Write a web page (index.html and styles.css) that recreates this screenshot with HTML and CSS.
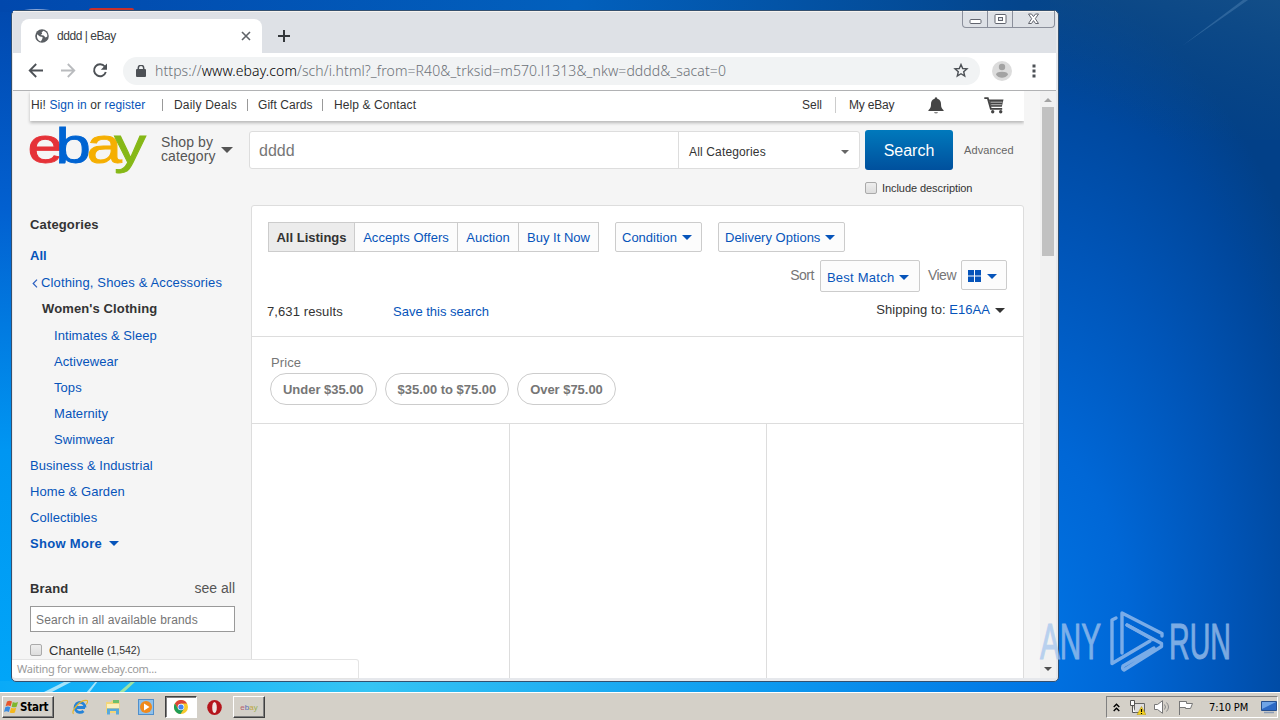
FILE: index.html
```html
<!DOCTYPE html>
<html lang="en">
<head>
    <meta charset="UTF-8">
    <meta name="viewport" content="width=device-width, initial-scale=1.0">
    <title>dddd | eBay</title>
    <link rel="stylesheet" href="styles.css">
</head>
<body>

<div class="desktop">
    <svg class="wallpaper" width="1280" height="693" viewBox="0 0 1280 693">
        <defs>
            <linearGradient id="leftSky" x1="0" y1="0" x2="0" y2="1">
                <stop offset="0" stop-color="#0148ad"/>
                <stop offset="0.3" stop-color="#0260d0"/>
                <stop offset="0.65" stop-color="#0096f2"/>
                <stop offset="1" stop-color="#01a6f8"/>
            </linearGradient>
            <linearGradient id="topSky" x1="0" y1="0" x2="1" y2="0">
                <stop offset="0" stop-color="#0148ad"/>
                <stop offset="0.45" stop-color="#0260bd"/>
                <stop offset="0.8" stop-color="#04458c"/>
                <stop offset="1" stop-color="#0b4a84"/>
            </linearGradient>
            <radialGradient id="rightSky" gradientUnits="userSpaceOnUse" cx="0" cy="0" r="1" gradientTransform="translate(1030 640) scale(330 660)">
                <stop offset="0" stop-color="#0074e4"/>
                <stop offset="0.3" stop-color="#0067d6"/>
                <stop offset="0.6" stop-color="#0055b8"/>
                <stop offset="0.85" stop-color="#00479c"/>
                <stop offset="1" stop-color="#024088"/>
            </radialGradient>
            <linearGradient id="skyTop" x1="1" y1="0" x2="0.5" y2="1">
                <stop offset="0" stop-color="#1a5488" stop-opacity="0.7"/>
                <stop offset="1" stop-color="#0b4780" stop-opacity="0"/>
            </linearGradient>
            <linearGradient id="bottomSky" x1="0" y1="0" x2="1" y2="0">
                <stop offset="0" stop-color="#0aaaf7"/>
                <stop offset="0.35" stop-color="#35c4f4"/>
                <stop offset="0.7" stop-color="#0f9df0"/>
                <stop offset="1" stop-color="#0074e4"/>
            </linearGradient>
        </defs>
        <rect width="1280" height="693" fill="url(#leftSky)"/>
        <rect width="1280" height="12" fill="url(#topSky)"/>
        <rect x="1050" width="230" height="693" fill="url(#rightSky)"/>
        <rect x="1050" width="230" height="140" fill="url(#skyTop)"/>
        <path d="M1182 46 1243 0h5z" fill="#5b8cbc" opacity="0.4"/>
        <rect y="681" width="1050" height="12" fill="url(#bottomSky)"/>
        <path d="M42 693 66 681h7L50 693zM86 693l10-12h2l-9 12z" fill="#c8f0fb" opacity="0.8"/>
        <path d="M118 693l14-12h4l-13 12z" fill="#9be3a4"/>
        <path d="M89 10q0-2 3-2h40q2 0 2 2z" fill="#c9302c"/>
        <path d="M24 10q12-2 26 0z" fill="#8aa6d6"/>
    </svg>

    <div class="window">
        <div class="tabstrip">
            <div class="tab">
                <svg class="tab-globe" width="14" height="14" viewBox="0 0 14 14">
                    <circle cx="7" cy="7" r="6.8" fill="#5a5e63"/>
                    <path d="M2 5.2 5 7.6 7.6 8.1 7.3 10 5.8 12.4Q1.4 11 2 5.2zM8.4 1.8 6.6 3.5 7.2 4.7 5.6 6 8.6 6.4 10.6 8.5 12.3 7.6Q12.8 3.2 8.4 1.8z" fill="#fff"/>
                </svg>
                <span class="tab-title">dddd | eBay</span>
                <svg class="tab-close" width="10" height="10" viewBox="0 0 10 10"><path d="M1 1l8 8M9 1 1 9" stroke="#5f6368" stroke-width="1.6"/></svg>
            </div>
            <svg class="tab-new" width="12" height="12" viewBox="0 0 12 12"><path d="M6 0v12M0 6h12" stroke="#34373b" stroke-width="2"/></svg>
            <div class="caption-buttons">
                <span class="caption-btn"><svg width="13" height="13" viewBox="0 0 13 13"><rect x="1" y="8.5" width="11" height="4" rx="1" fill="#fff" stroke="#62656f"/></svg></span>
                <span class="caption-btn"><svg width="13" height="13" viewBox="0 0 13 13"><rect x="1" y="3.500" width="11" height="9" rx="1" fill="#fff" stroke="#62656f"/><rect x="4.500" y="6.500" width="4" height="3" fill="#dee1e6" stroke="#62656f"/></svg></span>
                <span class="caption-btn caption-close"><svg width="13" height="13" viewBox="0 0 13 13"><path d="M1.500 3h3l2 2.600L8.500 3h3L8.300 7.700l3.200 4.800h-3l-2-2.900-2 2.900h-3l3.200-4.800z" fill="#fff" stroke="#62656f"/></svg></span>
            </div>
        </div>

        <div class="toolbar">
            <svg class="tool-icon" width="16" height="16" viewBox="0 0 16 16"><path d="M15 7.500H2M8.200 1 1.700 7.500l6.500 6.500" fill="none" stroke="#4d5156" stroke-width="1.800"/></svg>
            <svg class="tool-icon" width="16" height="16" viewBox="0 0 16 16"><path d="M1 7.500h13M7.800 1l6.500 6.500-6.500 6.500" fill="none" stroke="#b9bbbe" stroke-width="1.800"/></svg>
            <svg class="tool-icon" width="16" height="16" viewBox="0 0 16 16"><path d="M12.800 3.500A6 6 0 1 0 13.800 9" fill="none" stroke="#4d5156" stroke-width="1.900"/><path d="M15 .5v6.200H8.800z" fill="#4d5156"/></svg>
            <div class="omnibox">
                <svg width="10" height="13" viewBox="0 0 10 13"><rect y="4" width="10" height="8" rx="1" fill="#4d5156"/><path d="M2.300 5V3a2.700 2.700 0 0 1 5.400 0V5" fill="none" stroke="#4d5156" stroke-width="1.500"/></svg>
                <span class="url">https://<b>www.ebay.com</b>/sch/i.html?_from=R40&amp;_trksid=m570.l1313&amp;_nkw=dddd&amp;_sacat=0</span>
                <svg class="star" width="16" height="16" viewBox="0 0 16 16"><path d="M8 1.500l1.700 4 4.300.4-3.300 2.800 1 4.300L8 10.700 4.300 13l1-4.300L2 5.900l4.300-.4z" fill="none" stroke="#4d5156" stroke-width="1.400"/></svg>
            </div>
            <svg class="avatar" width="20" height="20" viewBox="0 0 20 20"><circle cx="10" cy="10" r="10" fill="#dcdcdc"/><circle cx="10" cy="6" r="3.200" fill="#a3a3a3"/><path d="M4 13.800q0-3 6-3t6 3q-2.200 3-6 3t-6-3z" fill="#a3a3a3"/></svg>
            <svg class="menu" width="4" height="14" viewBox="0 0 4 14"><path d="M.5.500h3v3h-3zM.5 5.500h3v3h-3zM.5 10.500h3v3h-3z" fill="#4d5156"/></svg>
        </div>

        <div class="viewport">
            <div class="page">
                <div class="topnav">
                    <span class="hello">Hi! <a>Sign in</a> or <a>register</a></span>
                    <span class="divider"></span>
                    <span class="deals">Daily Deals</span>
                    <span class="divider"></span>
                    <span class="gifts">Gift Cards</span>
                    <span class="divider"></span>
                    <span class="help">Help &amp; Contact</span>
                    <span class="sell">Sell</span>
                    <span class="divider tall"></span>
                    <span class="my-ebay">My eBay</span>
                    <svg class="bell" width="16" height="17" viewBox="0 0 16 17"><path d="M8 .3a1.300 1.300 0 0 1 1.300 1.500C12 2.400 13 4.600 13 7c0 3.500.8 4.600 2.600 6.300v.7H.4v-.7C2.200 11.600 3 10.500 3 7c0-2.400 1-4.600 3.700-5.200A1.300 1.300 0 0 1 8 .3z" fill="#444"/><path d="M6 15h4q-.4 1.500-2 1.500T6 15z" fill="#888"/></svg>
                    <svg class="cart" width="20" height="17" viewBox="0 0 20 17"><path d="M.3 1.200h3.500l3 10.600h11.400" fill="none" stroke="#444" stroke-width="1.800"/><path d="M4.800 2.500h14.700l-1.700 7.300H7z" fill="#444"/><path d="M6.500 5.200h12M7.200 7.700h10.500" stroke="#bbb"/><circle cx="8.700" cy="14.800" r="1.700" fill="#444"/><circle cx="16.700" cy="14.800" r="1.700" fill="#444"/></svg>
                </div>

                <div class="searchbar">
                    <svg class="logo" width="118" height="50" viewBox="0 0 118 50">
                        <text transform="translate(-2.600 37.300) scale(1.270 1)"><tspan class="logo-e">e</tspan><tspan class="logo-b" dx="-5.600">b</tspan><tspan class="logo-a" dx="-3.400">a</tspan><tspan class="logo-y" dx="-6">y</tspan></text>
                    </svg>
                    <div class="shop-by">Shop by<br>category</div>
                    <i class="caret caret-lg"></i>
                    <div class="search-field">
                        <span class="query">dddd</span>
                        <span class="category">All Categories<i class="caret caret-sm"></i></span>
                    </div>
                    <div class="search-side">
                        <div class="search-row">
                            <span class="search-btn">Search</span>
                            <span class="advanced">Advanced</span>
                        </div>
                        <div class="include"><i class="checkbox"></i>Include description</div>
                    </div>
                </div>

                <div class="columns">
                    <div class="sidebar">
                        <h3>Categories</h3>
                        <a class="all">All</a>
                        <ul>
                            <li class="parent"><svg width="6" height="9" viewBox="0 0 6 9"><path d="M5 .7 1.200 4.500 5 8.300" fill="none" stroke="#2a5fc0" stroke-width="1.200"/></svg>Clothing, Shoes &amp; Accessories</li>
                            <li class="current">Women's Clothing</li>
                            <li class="child">Intimates &amp; Sleep</li>
                            <li class="child">Activewear</li>
                            <li class="child">Tops</li>
                            <li class="child">Maternity</li>
                            <li class="child">Swimwear</li>
                            <li>Business &amp; Industrial</li>
                            <li>Home &amp; Garden</li>
                            <li>Collectibles</li>
                            <li class="more">Show More<i class="caret"></i></li>
                        </ul>
                        <div class="brand-head"><h3>Brand</h3><span>see all</span></div>
                        <div class="brand-input">Search in all available brands</div>
                        <div class="brand-row"><i class="checkbox"></i>Chantelle <small>(1,542)</small></div>
                    </div>

                    <div class="results">
                        <div class="filters">
                            <div class="tabs">
                                <span class="active">All Listings</span>
                                <span class="offers">Accepts Offers</span>
                                <span class="auction">Auction</span>
                                <span class="buy">Buy It Now</span>
                            </div>
                            <div class="dropdown condition">Condition<i class="caret"></i></div>
                            <div class="dropdown delivery">Delivery Options<i class="caret"></i></div>
                        </div>
                        <div class="sorting">
                            <span>Sort</span>
                            <div class="dropdown match">Best Match<i class="caret"></i></div>
                            <span>View</span>
                            <div class="dropdown view"><svg width="13" height="12" viewBox="0 0 13 12"><path d="M0 0h6v5.500H0zM7 0h6v5.500H7zM0 6.500h6V12H0zM7 6.500h6V12H7z" fill="#0654ba"/></svg><i class="caret"></i></div>
                        </div>
                        <div class="summary">
                            <span class="count">7,631 results</span>
                            <a class="save">Save this search</a>
                            <span class="shipping">Shipping to: <a>E16AA</a><i class="caret"></i></span>
                        </div>
                        <div class="price">
                            <div class="price-label">Price</div>
                            <div class="pills">
                                <span class="pill">Under $35.00</span>
                                <span class="pill">$35.00 to $75.00</span>
                                <span class="pill">Over $75.00</span>
                            </div>
                        </div>
                        <div class="items"><div></div><div></div><div></div></div>
                    </div>
                </div>
            </div>
            <div class="scrollbar">
                <i class="arrow-up"></i>
                <i class="thumb"></i>
                <i class="arrow-down"></i>
            </div>
        </div>
        <div class="status">Waiting for www.ebay.com...</div>
    </div>

    <svg class="watermark" width="210" height="72" viewBox="1034 604 210 72">
        <g class="watermark-text">
            <text x="1040" y="659" textLength="61" lengthAdjust="spacingAndGlyphs">ANY</text>
            <text x="1169" y="659" textLength="62" lengthAdjust="spacingAndGlyphs">RUN</text>
        </g>
        <g fill="none" stroke="#8fb9ec" stroke-width="3.400" stroke-linejoin="round" stroke-linecap="round" opacity="0.85">
            <path d="M1116 618l-4 2v43.500l38-22.500"/>
            <path d="M1122 653v-40l40 20.500v2.500M1127 625l26 14.500"/>
            <path d="M1127 625l34.500 18.500v3L1124 670q-2-1-1-4l31-18"/>
        </g>
    </svg>

    <div class="taskbar">
        <div class="start">
            <svg width="15" height="14" viewBox="0 0 15 14"><path d="M3 1.500q2.500-1.500 5 0L6.600 6.200q-2.500-1.300-5 0z" fill="#e8552b"/><path d="M8.800 2q2.500 1.300 5.200 0l-1.400 4.700q-2.600 1.300-5 0z" fill="#7fb72d"/><path d="M1.300 7.200q2.500-1.300 5 0L4.900 12q-2.600-1.400-4.900 0z" fill="#3a8be0"/><path d="M7.200 7.700q2.500 1.300 5 0L10.900 12.400q-2.600 1.400-5.200 0z" fill="#f5b81d"/></svg>
            Start
        </div>
        <div class="launch">
            <svg width="16" height="16" viewBox="0 0 16 16"><path d="M13 8.500H4.500M13 8.500A5 5 0 1 0 11.500 12" fill="none" stroke="#2583d8" stroke-width="2.800"/><path d="M1.500 14.800C-1 12 8 .5 15 1.500q1.500 1-.8 4" fill="none" stroke="#e3b52c" stroke-width="1.200"/></svg>
            <svg width="16" height="16" viewBox="0 0 16 16"><path d="M1 3h5l1-1.500h7.500V14H1z" fill="#f2d579"/><path d="M8 1h6v3H8z" fill="#6fc06b"/><path d="M2 5h12v4H2z" fill="#fbf0bd"/><path d="M2 15.500V9.500h12v6h-3V12H5v3.500z" fill="#58a9dc"/></svg>
            <svg width="16" height="16" viewBox="0 0 16 16"><rect x=".5" y=".5" width="15" height="15" fill="#8fc1ea" stroke="#4f8fcc"/><circle cx="8" cy="8" r="6" fill="#f08a1c"/><path d="M6 4.500 11.500 8 6 11.500z" fill="#fff"/></svg>
        </div>
        <div class="task task-active">
            <svg width="14" height="14" viewBox="0 0 14 14"><circle cx="7" cy="7" r="7" fill="#f7c92c"/><path d="M.9 3.500A7 7 0 0 1 13.100 3.500H7L4 8.800z" fill="#dc4437"/><path d="M.9 3.500A7 7 0 0 0 6.500 14L10 8.700H4z" fill="#1f9d57"/><circle cx="7" cy="7" r="3.300" fill="#fff"/><circle cx="7" cy="7" r="2.600" fill="#4384f3"/></svg>
        </div>
        <svg class="opera" width="15" height="15" viewBox="0 0 15 15"><ellipse cx="7.500" cy="7.500" rx="7.300" ry="7.500" fill="#b5151c"/><ellipse cx="7.500" cy="7.500" rx="2.300" ry="5.600" fill="#efe5e2"/></svg>
        <div class="task task-ebay"><span class="c-red">e</span><span class="c-blue">b</span><span class="c-yellow">a</span><span class="c-green">y</span></div>
        <div class="tray">
            <svg width="7" height="9" viewBox="0 0 7 9"><path d="M.7 4 3.500 1.200 6.300 4M.7 8 3.500 5.200 6.300 8" fill="none" stroke="#000" stroke-width="1.400"/></svg>
            <svg class="network" width="16" height="15" viewBox="0 0 16 15"><path d="M4.500 3.500h10v9h-10z" fill="#ddd" stroke="#666"/><path d="M.5.500h4v5h-4zM2.500 5.500v7h3" fill="#fff" stroke="#555"/><path d="M11.500 6.500 16 14.800H7z" fill="#f5d21d" stroke="#a98a10" stroke-width=".5"/><path d="M11.500 9v3M11.500 13v1" stroke="#000" stroke-width="1.200"/></svg>
            <svg class="sound" width="16" height="14" viewBox="0 0 16 14"><path d="M.5 4.500h3L8.500.700v12.600L3.500 9.500h-3z" fill="#fff" stroke="#777"/><path d="M10.500 4.500q2 2.500 0 5M12.500 2.500q4 4.500 0 9" fill="none" stroke="#888"/></svg>
            <svg class="flag" width="16" height="15" viewBox="0 0 16 15"><path d="M1.500 1v14M1.500 1.500h7v2h6l-2 5h-5v-1h-6z" fill="#fff" stroke="#777"/></svg>
            <span class="clock">7:10 PM</span>
            <svg class="show-desktop" width="16" height="14" viewBox="0 0 16 14"><path d="M.5 1.500h15v9H.5z" fill="#2c69c4" stroke="#26508f"/><path d="M1 2h14L1 9z" fill="#6fa4e6"/><path d="M3 12.500h10" stroke="#8b9cb5" stroke-width="1.500"/></svg>
        </div>
    </div>
</div>

</body>
</html>
```
FILE: styles.css
```css
* {
    box-sizing: border-box;
}

body {
    margin: 0;
    font-family: "Liberation Sans", Arial, sans-serif;
    font-size: 13px;
    color: #333;
    overflow: hidden;
}

svg {
    display: block;
    flex: none;
}

h3, ul {
    margin: 0;
    padding: 0;
    list-style: none;
}

.desktop {
    position: relative;
    width: 1280px;
    height: 720px;
    overflow: hidden;
    white-space: nowrap;
}

.wallpaper {
    position: absolute;
    top: 0;
    left: 0;
}

/* browser window */
.window {
    position: absolute;
    left: 11px;
    top: 10px;
    width: 1048px;
    height: 672px;
    border: 1px solid #34506f;
    border-radius: 5px;
    background: #e6e8ec;
    padding: 0 2px 3px 1px;
    display: flex;
    flex-direction: column;
}

.tabstrip {
    height: 42px;
    display: flex;
    background: #dee1e6;
    border-top: 1px solid #f6f3f0;
}

.tab {
    width: 241px;
    height: 34px;
    margin: 7px 0 0 8px;
    padding: 0 11px 0 14px;
    display: flex;
    align-items: center;
    background: #fff;
    border-radius: 8px 8px 0 0;
}

.tab-title {
    margin-left: 8px;
    flex: 1;
    font-size: 12px;
    letter-spacing: -0.45px;
    color: #3c4043;
}

.tab-new {
    margin: 18px 0 0 16px;
}

.caption-buttons {
    display: flex;
    height: 17px;
    margin: -1px 1px 0 auto;
    border: 1px solid #8b8f9b;
    border-top: 0;
    border-radius: 0 0 4px 4px;
}

.caption-btn {
    width: 25px;
    display: flex;
    justify-content: center;
    border-right: 1px solid #8b8f9b;
}

.caption-close {
    width: 41px;
    border-right: 0;
}

.toolbar {
    height: 38px;
    display: flex;
    align-items: center;
    padding: 0 0 1px 15px;
    background: #fff;
    border-bottom: 1px solid #b1b2b4;
}

.tool-icon {
    margin-right: 16px;
}

.omnibox {
    width: 857px;
    height: 28px;
    margin-left: -1px;
    padding: 0 11px 0 13px;
    display: flex;
    align-items: center;
    background: #f1f3f4;
    border-radius: 14px;
}

.url {
    flex: 1;
    margin-left: 9px;
    font-family: "Noto Sans", "Open Sans", sans-serif;
    font-weight: 300;
    font-size: 14px;
    line-height: 26px;
    letter-spacing: 0.09px;
    color: #6c7177;
}

.url b {
    font-weight: 300;
    color: #000;
}

.avatar {
    margin-left: 12px;
}

.menu {
    margin-left: 20px;
}

.viewport {
    flex: 1;
    display: flex;
    min-height: 0;
    background: #f5f5f5;
}

.page {
    width: 1011px;
    padding-left: 17px;
    overflow: hidden;
}

.page a {
    color: #0654ba;
}

/* top navigation */
.topnav {
    height: 30px;
    padding: 0 0 2px 1px;
    display: flex;
    align-items: center;
    background: #fff;
    box-shadow: 0 2px 3px rgba(0, 0, 0, 0.25);
    font-size: 12px;
    line-height: 28px;
}

.divider {
    width: 1px;
    height: 12px;
    background: #999;
}

.hello {
    width: 131px;
    letter-spacing: 0.1px;
}

.deals {
    width: 73px;
    margin-left: 11px;
    letter-spacing: 0.2px;
}

.gifts {
    width: 64px;
    margin-left: 10px;
    letter-spacing: 0.05px;
}

.help {
    margin-left: 11px;
    letter-spacing: 0.1px;
}

.sell {
    margin-left: auto;
    width: 33px;
}

.tall {
    height: 16px;
    background: #ccc;
}

.my-ebay {
    width: 79px;
    margin-left: 13px;
    letter-spacing: -0.2px;
}

.cart {
    margin: 0 20px 0 40px;
}

/* search row */
.searchbar {
    height: 84px;
    display: flex;
}

.logo {
    margin-top: 5px;
    font-size: 50px;
    stroke-width: 0.9px;
    overflow: visible;
}

.logo-e {
    fill: #e53238;
    stroke: #e53238;
}

.logo-b {
    fill: #0064d2;
    stroke: #0064d2;
}

.logo-a {
    fill: #f5af02;
    stroke: #f5af02;
}

.logo-y {
    fill: #86b817;
    stroke: #86b817;
}

.shop-by {
    width: 60px;
    margin: 14px 0 0 13px;
    font-size: 14px;
    line-height: 14px;
    letter-spacing: 0.1px;
    color: #555;
}

.caret {
    display: inline-block;
    border: 5px solid transparent;
    border-top: 5px solid #0654ba;
    border-bottom: 0;
    flex: none;
}

.caret-lg {
    margin-top: 26px;
    border-width: 6px 6px 0;
    border-top-color: #555;
}

.caret-sm {
    border-width: 4px 4px 0;
    border-top-color: #666;
}

.search-field {
    width: 611px;
    height: 38px;
    margin: 10px 0 0 16px;
    display: flex;
    background: #fff;
    border: 1px solid #ddd;
    border-radius: 3px;
}

.query {
    flex: 1;
    padding-left: 9px;
    font-size: 16px;
    line-height: 38px;
    color: #777;
}

.category {
    width: 181px;
    padding: 3px 10px 0 10px;
    display: flex;
    align-items: center;
    justify-content: space-between;
    border-left: 1px solid #ddd;
    font-size: 12px;
    letter-spacing: 0.15px;
}

.search-side {
    margin: 9px 0 0 5px;
}

.search-row {
    display: flex;
    align-items: center;
}

.search-btn {
    width: 88px;
    height: 40px;
    border-radius: 3px;
    background: linear-gradient(#0079bc, #00509d);
    color: #fff;
    font-size: 16px;
    line-height: 41px;
    text-align: center;
}

.advanced {
    margin-left: 11px;
    font-size: 11px;
    letter-spacing: 0.1px;
    color: #666;
}

.include {
    display: flex;
    align-items: center;
    margin-top: 12px;
    font-size: 11px;
    line-height: 12px;
    letter-spacing: -0.07px;
}

.checkbox {
    width: 12px;
    height: 12px;
    margin-right: 5px;
    border: 1px solid #aaa;
    border-radius: 2px;
    background: linear-gradient(#eee, #ddd);
}

/* sidebar */
.columns {
    display: flex;
}

.sidebar {
    width: 205px;
    margin-right: 16px;
    color: #0654ba;
}

.sidebar h3 {
    font-size: 13px;
    line-height: 20px;
    letter-spacing: 0.15px;
    color: #333;
}

.sidebar > h3 {
    padding-top: 10px;
}

.all {
    display: block;
    padding: 11px 0 4px;
    font-weight: bold;
    line-height: 20px;
}

.sidebar li {
    height: 26px;
    line-height: 26px;
    letter-spacing: 0.06px;
}

.sidebar .parent {
    display: flex;
    align-items: center;
    gap: 3px;
    padding-left: 2px;
    letter-spacing: 0.14px;
}

.sidebar .current {
    height: 27px;
    padding-left: 12px;
    font-weight: bold;
    letter-spacing: 0.12px;
    color: #333;
}

.sidebar .child {
    padding-left: 24px;
}

.sidebar .more {
    font-weight: bold;
    letter-spacing: 0.3px;
}

.more .caret {
    margin: 0 0 2px 7px;
}

.brand-head {
    display: flex;
    justify-content: space-between;
    margin-top: 22px;
    line-height: 20px;
}

.brand-head span {
    font-size: 14px;
    line-height: 18px;
    color: #555;
}

.brand-input {
    height: 26px;
    margin-top: 7px;
    padding-left: 5px;
    border: 1px solid #999;
    background: #fff;
    font-size: 12px;
    line-height: 26px;
    letter-spacing: 0.17px;
    color: #757575;
}

.brand-row {
    display: flex;
    align-items: center;
    height: 36px;
    color: #333;
}

.brand-row .checkbox {
    margin-right: 7px;
}

.brand-row small {
    margin-left: 3px;
    font-size: 10.5px;
}

/* results */
.results {
    width: 773px;
    height: 600px;
    background: #fff;
    border: 1px solid #ddd;
    border-radius: 3px;
}

.filters {
    display: flex;
    padding: 16px 0 0 16px;
    height: 54px;
    color: #0654ba;
}

.tabs {
    display: flex;
    height: 30px;
    margin-right: 16px;
    border: 1px solid #ccc;
    background: #fcfcfc;
    line-height: 29px;
}

.tabs span {
    width: 61px;
    text-align: center;
    border-right: 1px solid #ccc;
}

.tabs .active {
    width: 86px;
    font-weight: bold;
    color: #333;
    background: #ececec;
}

.tabs .offers {
    width: 103px;
    letter-spacing: 0.05px;
}

.tabs .buy {
    width: 79px;
    border-right: 0;
}

.dropdown {
    display: flex;
    align-items: center;
    gap: 5px;
    height: 30px;
    padding: 1px 0 0 6px;
    border: 1px solid #ccc;
    border-radius: 2px;
    background: #fcfcfc;
    color: #0654ba;
}

.condition {
    width: 87px;
    margin-right: 16px;
}

.delivery {
    width: 127px;
}

.sorting {
    display: flex;
    justify-content: flex-end;
    height: 32px;
    padding-right: 16px;
    font-size: 14px;
    line-height: 30px;
    letter-spacing: -0.5px;
    color: #767676;
}

.match {
    width: 100px;
    height: 32px;
    margin: 0 8px 0 6px;
    font-size: 13px;
    letter-spacing: 0.25px;
    padding-top: 3px;
}

.view {
    width: 46px;
    margin-left: 5px;
    padding-top: 2px;
    gap: 6px;
}

.summary {
    display: flex;
    height: 45px;
    padding: 0 18px 0 15px;
    border-bottom: 1px solid #ddd;
    line-height: 39px;
}

.count {
    width: 126px;
    letter-spacing: 0.1px;
}

.shipping {
    margin-left: auto;
    line-height: 35px;
    letter-spacing: 0.05px;
}

.shipping .caret {
    margin: 0 0 1px 5px;
    border-top-color: #333;
}

.price {
    height: 87px;
    padding: 15px 0 0 18px;
    border-bottom: 1px solid #ddd;
}

.price-label {
    padding-left: 1px;
    line-height: 21px;
    color: #767676;
    letter-spacing: 0.1px;
}

.pills {
    display: flex;
    gap: 8px;
}

.pill {
    height: 32px;
    padding: 0 12px;
    border: 1px solid #ccc;
    border-radius: 16px;
    line-height: 31px;
    font-weight: bold;
    letter-spacing: -0.03px;
    color: #767676;
}

.items {
    display: grid;
    grid-template-columns: 258px 257px 1fr;
    height: 100%;
}

.items div {
    border-right: 1px solid #ddd;
}

.items div:last-child {
    border-right: 0;
}

.scrollbar {
    width: 16px;
    margin-left: auto;
    display: flex;
    flex-direction: column;
    align-items: center;
    background: #f1f1f1;
}

.arrow-up {
    margin-top: 7px;
    border: 4px solid transparent;
    border-top: 0;
    border-bottom-color: #a3a3a3;
}

.thumb {
    width: 12px;
    height: 149px;
    margin-top: 5px;
    background: #c1c1c1;
}

.arrow-down {
    margin: auto 0 7px;
    border: 4px solid transparent;
    border-top-color: #505050;
    border-bottom: 0;
}

.status {
    position: absolute;
    left: 0;
    bottom: 2px;
    width: 347px;
    height: 20px;
    padding-left: 5px;
    border: 1px solid #e4e4e4;
    border-left: 0;
    border-radius: 0 3px 0 4px;
    background: #fff;
    font-family: "Noto Sans", sans-serif;
    font-size: 11px;
    line-height: 18px;
    letter-spacing: -0.27px;
    color: #9a9a9a;
}

.watermark {
    position: absolute;
    left: 1034px;
    top: 604px;
}

.watermark-text {
    fill: #a5c6ee;
    stroke: #a5c6ee;
    stroke-width: 1px;
    opacity: 0.75;
    font-size: 50px;
}

/* taskbar */
.taskbar {
    position: absolute;
    left: 0;
    bottom: 0;
    width: 1280px;
    height: 28px;
    padding: 3px 2px 2px;
    display: flex;
    align-items: center;
    background: #d4d0c8;
    border-top: 1px solid #fff;
}

.start {
    width: 52px;
    height: 22px;
    padding-left: 1px;
    display: flex;
    align-items: center;
    gap: 1px;
    border: 1px solid;
    border-color: #fff #404040 #404040 #fff;
    box-shadow: inset -1px -1px #808080;
    color: #000;
    font-family: "DejaVu Sans Condensed", "DejaVu Sans", sans-serif;
    font-size: 11.5px;
    font-weight: bold;
    letter-spacing: -0.25px;
}

.launch {
    display: flex;
    gap: 17px;
    margin: 0 11px 0 18px;
}

.task {
    width: 32px;
    height: 22px;
    display: flex;
    align-items: center;
    justify-content: center;
    border: 1px solid;
    border-color: #fff #404040 #404040 #fff;
    box-shadow: inset -1px -1px #808080;
    font-size: 8px;
}

.task-active {
    background: #fff;
    border-color: #404040 #fff #fff #404040;
    box-shadow: inset 1px 1px #808080;
}

.opera {
    margin: 0 11px 0 10px;
}

.c-red {
    color: #b8606a;
}

.c-blue {
    color: #586eb0;
}

.c-yellow {
    color: #c2a740;
}

.c-green {
    color: #98b050;
}

.tray {
    width: 172px;
    height: 22px;
    margin-left: auto;
    padding-left: 6px;
    display: flex;
    align-items: center;
    border: 1px solid;
    border-color: #808080 #fff #fff #808080;
}

.network {
    margin-left: 10px;
}

.sound {
    margin-left: 8px;
}

.flag {
    margin-left: 8px;
}

.clock {
    margin-left: 15px;
    color: #000;
    font-family: "DejaVu Sans Condensed", "DejaVu Sans", sans-serif;
    font-size: 11px;
    letter-spacing: -0.1px;
}

.show-desktop {
    margin-left: auto;
}
```
